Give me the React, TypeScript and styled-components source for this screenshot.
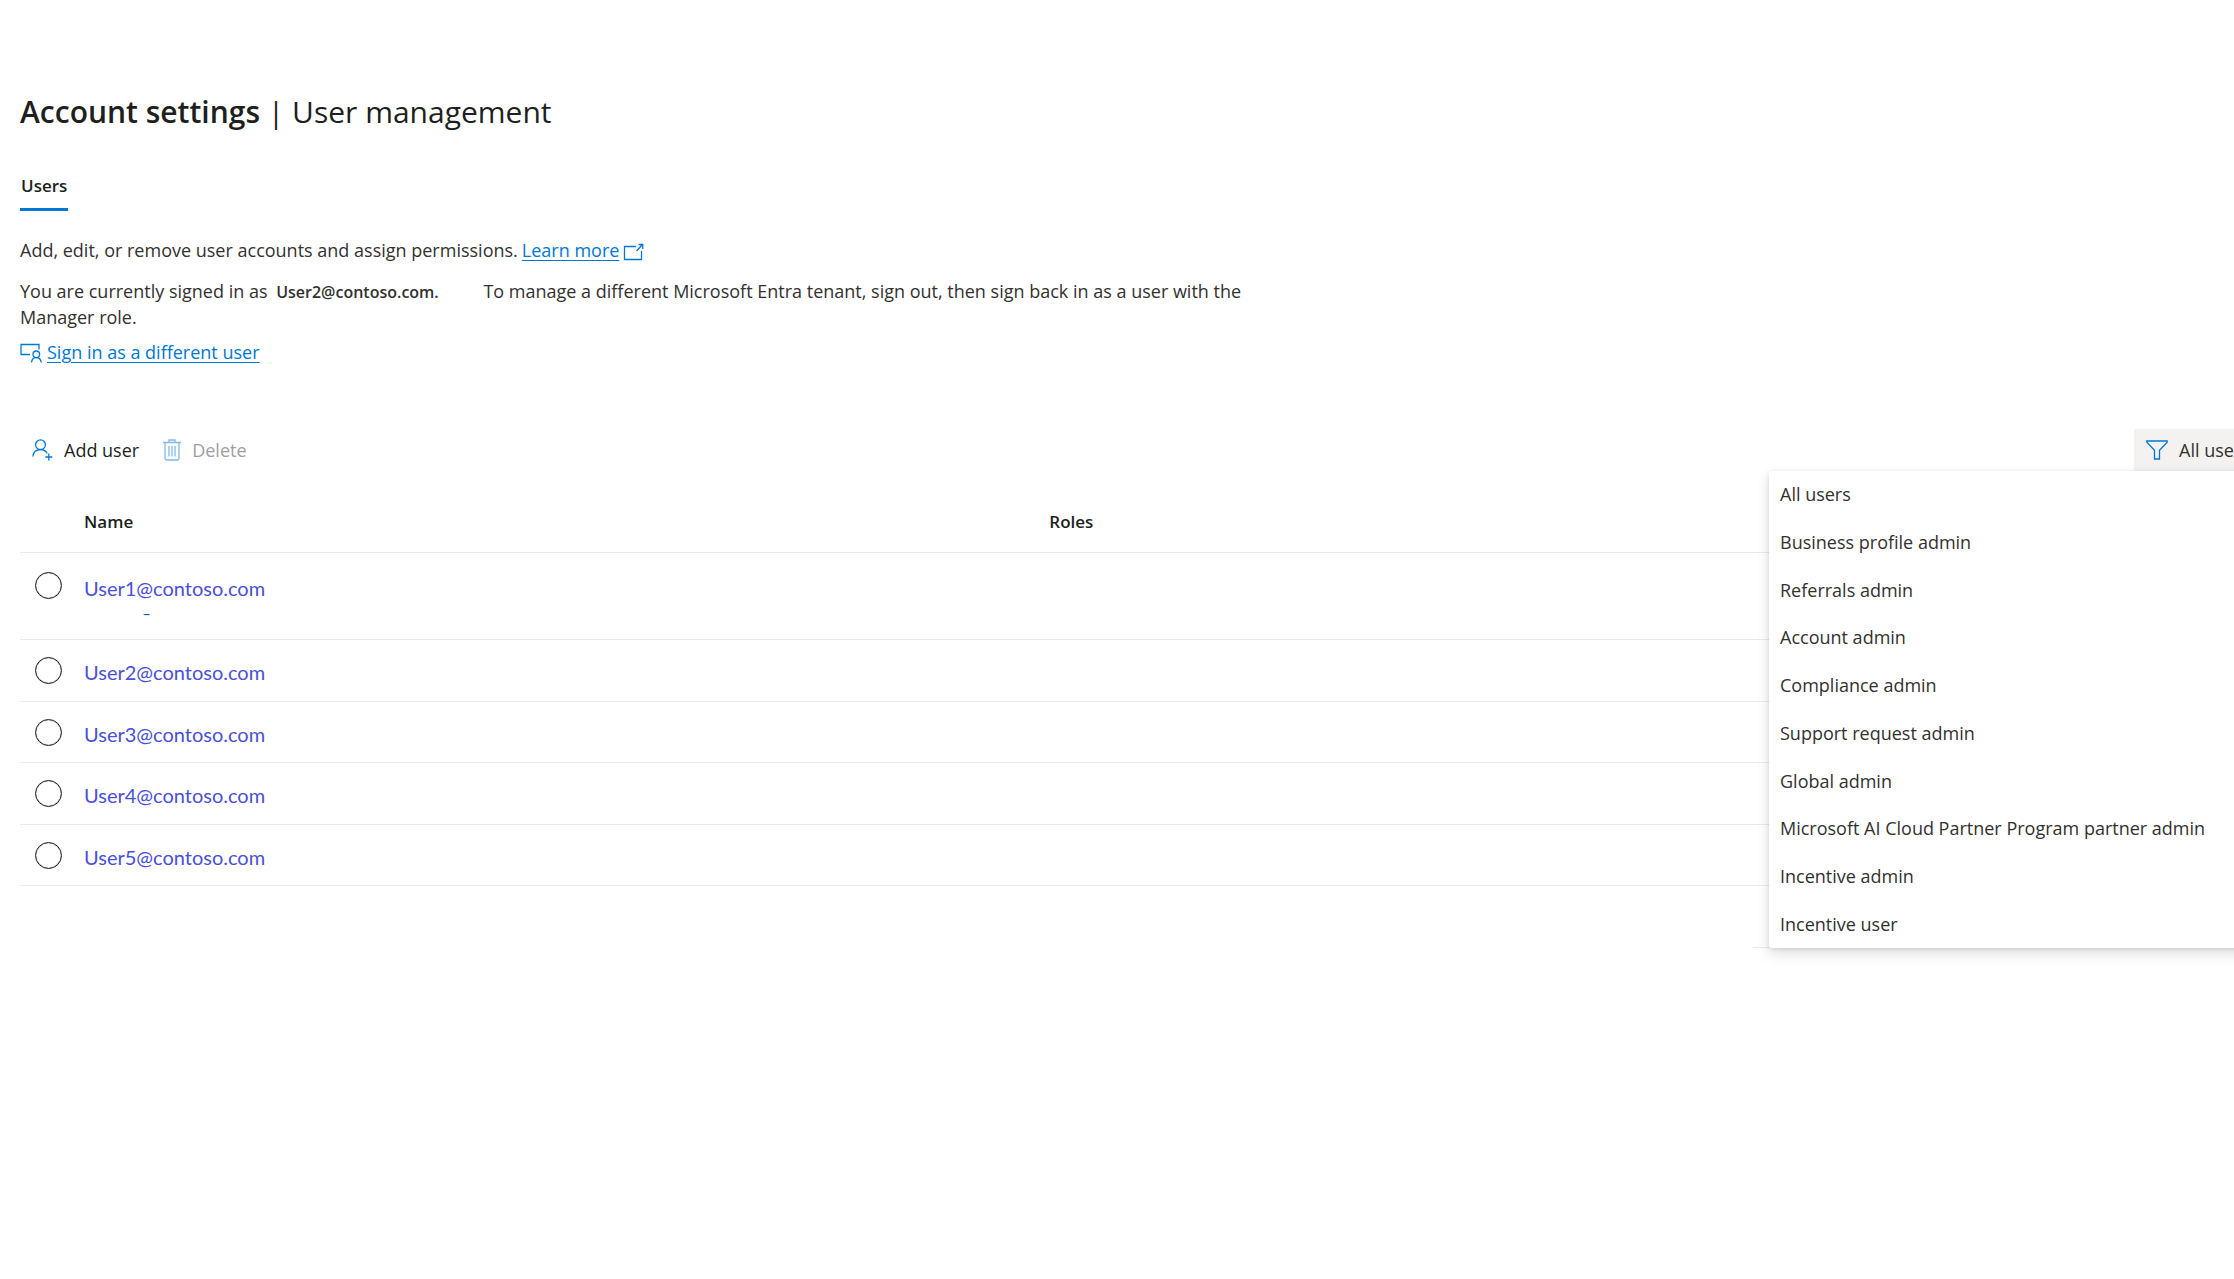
import React from "react";
import styled, { createGlobalStyle } from "styled-components";

const GlobalStyle = createGlobalStyle`
  * { box-sizing: border-box; }
  body {
    margin: 0;
    background: #fff;
    color: #323130;
    font-family: "Open Sans", "Noto Sans", sans-serif;
    font-size: 18px;
    line-height: 25px;
  }
`;

const Page = styled.main`
  overflow: hidden;
  padding: 88px 0 80px 20px;
`;

const Title = styled.h1`
  margin: 0;
  font-size: 30px;
  line-height: 48px;
  font-weight: 400;
  color: #201f1e;

  strong { font-weight: 600; }
`;

const Tabs = styled.div`
  display: flex;
  margin-top: 32px;
`;

const Tab = styled.button`
  padding: 5px 1px 10px;
  border: 0;
  border-bottom: 3px solid #0078d4;
  background: none;
  color: #201f1e;
  font: inherit;
  font-size: 17px;
  font-weight: 600;
`;

const Intro = styled.section`
  max-width: 1240px;
  margin-top: 27px;
`;

const Paragraph = styled.p`
  margin: 0 0 16px;
`;

const Email = styled.strong`
  margin: 0 40px 0 4px;
  font-size: 16px;
  font-weight: 600;
`;

const Link = styled.a`
  color: #0078d4;
  text-decoration: underline;
  text-underline-offset: 3px;
`;

const LearnMore = styled(Link)`
  margin: 0 4px;
`;

const SwitchUser = styled.div`
  display: flex;
  align-items: center;
  gap: 5px;
  margin-top: -6px;
`;

const Icon = styled.svg`
  flex: none;
  fill: none;
  stroke: #0078d4;
  stroke-width: 1.3;
  vertical-align: middle;
`;

const Toolbar = styled.div`
  display: flex;
  justify-content: space-between;
  margin: 64px -20px 0 0;
`;

const Actions = styled.div`
  display: flex;
`;

const Command = styled.button`
  display: flex;
  align-items: center;
  gap: 11px;
  height: 42px;
  padding: 0 12px;
  border: 0;
  background: none;
  color: #201f1e;
  font: inherit;

  &:disabled { color: #a19f9d; }
  &:disabled svg { opacity: 0.5; }
`;

const Filter = styled.div`
  position: relative;
`;

const FilterButton = styled(Command)`
  width: 120px;
  background: #f3f2f1;
  color: #323130;
  white-space: nowrap;
`;

const Menu = styled.ul`
  position: absolute;
  top: 100%;
  right: 0;
  z-index: 1;
  display: grid;
  grid-auto-rows: 1fr;
  width: 485px;
  height: 477px;
  margin: 0;
  padding: 0;
  list-style: none;
  background: #fff;
  border-radius: 2px;
  box-shadow: 0 6px 14px rgba(0, 0, 0, 0.13), 0 1px 4px rgba(0, 0, 0, 0.11);
`;

const MenuItem = styled.button`
  width: 100%;
  height: 100%;
  padding: 0 11px;
  border: 0;
  background: none;
  color: inherit;
  font: inherit;
  text-align: left;
`;

const Table = styled.table`
  width: 100%;
  table-layout: fixed;
  border-collapse: separate;
  border-spacing: 0;

  th, td {
    padding: 0;
    border-bottom: 1px solid #e9e9e9;
    text-align: left;
  }
`;

const SelectColumn = styled.col`width: 64px;`;
const NameColumn = styled.col`width: 43.6%;`;
const ActionColumn = styled.col`width: 481px;`;

const HeadRow = styled.tr`
  height: 82px;
  color: #201f1e;

  th {
    padding-top: 20px;
    font-size: 17px;
    font-weight: 600;
    vertical-align: middle;
  }
`;

const Row = styled.tr<{ $tall?: boolean }>`
  height: ${(p) => (p.$tall ? 87 : 61)}px;
  vertical-align: ${(p) => (p.$tall ? "top" : "middle")};

  &:nth-child(even) { height: 62px; }
  td { padding-top: ${(p) => (p.$tall ? 19 : 0)}px; }
`;

const EmptyRow = styled(Row)`
  td:not(:last-child) { border-bottom: 0; }
`;

const Radio = styled.input`
  appearance: none;
  display: block;
  width: 27px;
  height: 27px;
  margin: 0 0 0 15px;
  border: 1px solid #201f1e;
  border-radius: 50%;
  box-shadow: inset 0 0 1px #201f1e;

  &:checked { border-width: 8px; }
`;

const UserName = styled.label`
  display: block;
  padding-top: 4px;
  color: #4a50d8;
  font-family: Lato, "Open Sans", sans-serif;
  font-size: 20px;
  font-weight: 400;
`;

const Detail = styled.div`
  padding-left: 59px;
  color: #0067b8;
  font-size: 14px;
`;

const users = [
  { email: "User1@contoso.com", detail: "–" },
  { email: "User2@contoso.com" },
  { email: "User3@contoso.com" },
  { email: "User4@contoso.com" },
  { email: "User5@contoso.com" },
];

const filters = [
  "All users",
  "Business profile admin",
  "Referrals admin",
  "Account admin",
  "Compliance admin",
  "Support request admin",
  "Global admin",
  "Microsoft AI Cloud Partner Program partner admin",
  "Incentive admin",
  "Incentive user",
];

const ExternalIcon = () => (
  <Icon width="21" height="18" viewBox="0 0 21 18" aria-hidden="true">
    <path d="M13 3.5H1.5v13h17V8M13.5 8 19.5 1.5M15.5 1.5h4.3v4.5" />
  </Icon>
);

const SwitchUserIcon = () => (
  <Icon width="22" height="20" viewBox="0 0 22 20" aria-hidden="true">
    <path d="M10 11.5H1V1.5h18v5" />
    <circle cx="16.3" cy="11.3" r="3.3" />
    <path d="M11.5 19.5c.3-3 2.2-4.9 4.8-4.9s4.5 1.9 4.900 4.900" />
  </Icon>
);

const AddUserIcon = () => (
  <Icon width="21" height="22" viewBox="0 0 21 22" aria-hidden="true">
    <circle cx="8.500" cy="5.700" r="4.900" />
    <path d="M.8 17.500c.6-4.200 3.600-7 7.700-7 3 0 5.400 1.500 6.700 4M16.800 14.500v7M13.300 18h7" />
  </Icon>
);

const DeleteIcon = () => (
  <Icon width="18" height="22" viewBox="0 0 18 22" aria-hidden="true">
    <path d="M0 3.500h18M6 3.500v-2.500h6v2.500M2 3.500v15.500q0 2 2 2h10q2 0 2-2V3.500M6 7v10.500M9 7v10.500M12 7v10.500" />
  </Icon>
);

const FilterIcon = () => (
  <Icon width="22" height="20" viewBox="0 0 22 20" aria-hidden="true">
    <path d="M.8 1h20.400v1.200l-7.700 8V19h-5v-8.800l-7.700-8z" />
  </Icon>
);

export default function App() {
  return (
    <>
      <GlobalStyle />
      <Page>
        <Title>
          <strong>Account settings</strong> | User management
        </Title>
        <Tabs role="tablist">
          <Tab role="tab" aria-selected="true">Users</Tab>
        </Tabs>
        <Intro>
          <Paragraph>
            Add, edit, or remove user accounts and assign permissions.
            <LearnMore href="#learn-more">Learn more</LearnMore>
            <ExternalIcon />
          </Paragraph>
          <Paragraph>
            You are currently signed in as <Email>User2@contoso.com.</Email> To manage a
            different Microsoft Entra tenant, sign out, then sign back in as a user with
            the Manager role.
          </Paragraph>
          <SwitchUser>
            <SwitchUserIcon />
            <Link href="#sign-in">Sign in as a different user</Link>
          </SwitchUser>
        </Intro>
        <Toolbar>
          <Actions>
            <Command type="button"><AddUserIcon />Add user</Command>
            <Command type="button" disabled><DeleteIcon />Delete</Command>
          </Actions>
          <Filter>
            <FilterButton type="button" aria-haspopup="menu" aria-expanded="true">
              <FilterIcon />All users
            </FilterButton>
            <Menu role="menu">
              {filters.map((name) => (
                <li key={name} role="none">
                  <MenuItem type="button" role="menuitem">{name}</MenuItem>
                </li>
              ))}
            </Menu>
          </Filter>
        </Toolbar>
        <Table>
          <colgroup>
            <SelectColumn />
            <NameColumn />
            <col />
            <ActionColumn />
          </colgroup>
          <thead>
            <HeadRow>
              <th aria-label="Select" />
              <th scope="col">Name</th>
              <th scope="col">Roles</th>
              <th />
            </HeadRow>
          </thead>
          <tbody>
            {users.map((user) => (
              <Row key={user.email} $tall={Boolean(user.detail)}>
                <td><Radio type="radio" name="user" id={user.email} /></td>
                <td>
                  <UserName htmlFor={user.email}>{user.email}</UserName>
                  {user.detail && <Detail>{user.detail}</Detail>}
                </td>
                <td />
                <td />
              </Row>
            ))}
            <EmptyRow>
              <td /><td /><td /><td />
            </EmptyRow>
          </tbody>
        </Table>
      </Page>
    </>
  );
}
